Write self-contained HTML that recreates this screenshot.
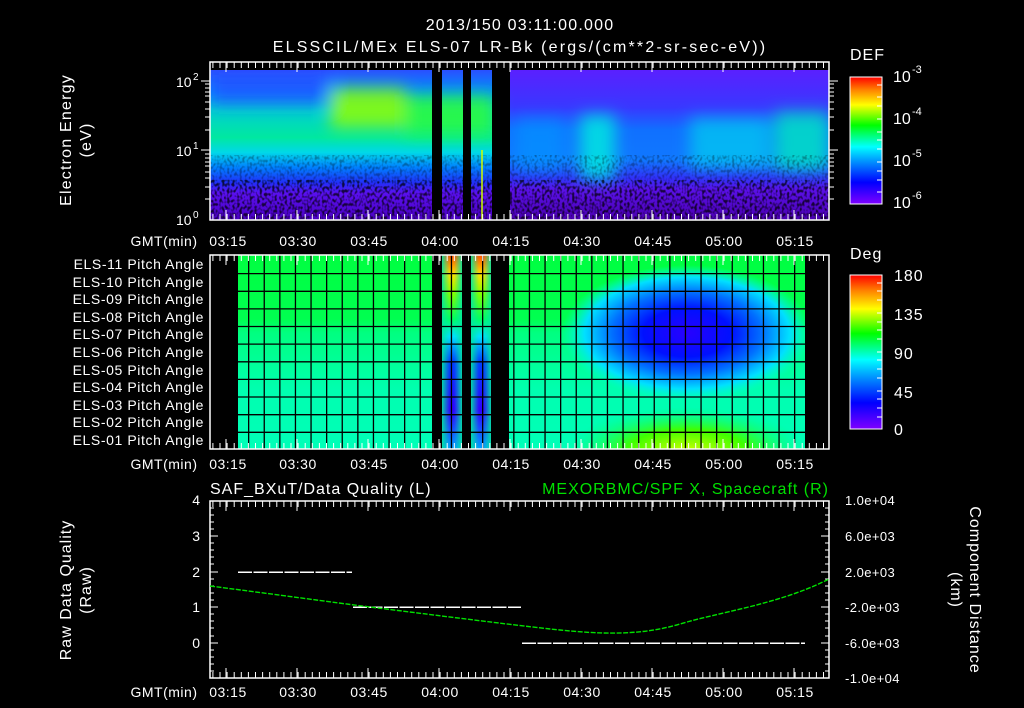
<!DOCTYPE html>
<html><head><meta charset="utf-8"><style>
html,body{margin:0;padding:0;background:#000;}
svg{display:block;}
text{font-family:"Liberation Sans",sans-serif;fill:#fff;}
</style></head><body>
<svg width="1024" height="708" viewBox="0 0 1024 708" xmlns="http://www.w3.org/2000/svg" font-size="14">
<defs>
<linearGradient id="rb" x1="0" y1="1" x2="0" y2="0">
<stop offset="0" stop-color="#7f00ff"/><stop offset="0.17" stop-color="#0000ff"/><stop offset="0.35" stop-color="#00a0ff"/><stop offset="0.45" stop-color="#00ffff"/><stop offset="0.62" stop-color="#00ff00"/><stop offset="0.78" stop-color="#ffff00"/><stop offset="0.9" stop-color="#ff8000"/><stop offset="1" stop-color="#ff0000"/>
</linearGradient>
<linearGradient id="sA" x1="0" y1="70" x2="0" y2="220" gradientUnits="userSpaceOnUse">
<stop offset="0" stop-color="#2a50ff"/><stop offset="0.15" stop-color="#0090ff"/><stop offset="0.27" stop-color="#00d0d0"/><stop offset="0.45" stop-color="#00e8a0"/><stop offset="0.55" stop-color="#00d8e8"/><stop offset="0.65" stop-color="#0080ff"/><stop offset="0.75" stop-color="#2030f8"/><stop offset="0.82" stop-color="#5a10f0"/><stop offset="1" stop-color="#4a00c0"/>
</linearGradient>
<linearGradient id="sD" x1="0" y1="70" x2="0" y2="220" gradientUnits="userSpaceOnUse">
<stop offset="0" stop-color="#5a20ff"/><stop offset="0.25" stop-color="#3838ff"/><stop offset="0.4" stop-color="#1070ff"/><stop offset="0.6" stop-color="#1078ff"/><stop offset="0.72" stop-color="#3030f8"/><stop offset="0.8" stop-color="#5a10e8"/><stop offset="1" stop-color="#4a00b0"/>
</linearGradient>
<linearGradient id="pA" x1="0" y1="255" x2="0" y2="449" gradientUnits="userSpaceOnUse">
<stop offset="0" stop-color="#00ff40"/><stop offset="0.33" stop-color="#00ff50"/><stop offset="0.4" stop-color="#00ff80"/><stop offset="0.7" stop-color="#00ffb0"/><stop offset="1" stop-color="#00ffb8"/>
</linearGradient>
<linearGradient id="pB" x1="0" y1="255" x2="0" y2="449" gradientUnits="userSpaceOnUse">
<stop offset="0" stop-color="#ff5000"/><stop offset="0.1" stop-color="#ffe000"/><stop offset="0.2" stop-color="#80ff00"/><stop offset="0.33" stop-color="#00ff60"/><stop offset="0.42" stop-color="#00e0ff"/><stop offset="0.55" stop-color="#0040ff"/><stop offset="0.8" stop-color="#3000ff"/><stop offset="1" stop-color="#00a0ff"/>
</linearGradient>
<linearGradient id="edge" x1="0" y1="0" x2="1" y2="0">
<stop offset="0" stop-color="#00e8a0" stop-opacity="0.9"/><stop offset="0.4" stop-color="#00e8a0" stop-opacity="0"/><stop offset="0.6" stop-color="#00e8a0" stop-opacity="0"/><stop offset="1" stop-color="#00e8a0" stop-opacity="0.9"/>
</linearGradient>
<radialGradient id="blue" cx="687" cy="333" r="1" gradientUnits="userSpaceOnUse" gradientTransform="translate(687 333) scale(125 68) translate(-687 -333)">
<stop offset="0" stop-color="#2800ff"/><stop offset="0.35" stop-color="#0010ff"/><stop offset="0.6" stop-color="#0070ff"/><stop offset="0.82" stop-color="#00e0ff"/><stop offset="1" stop-color="#00ffd0" stop-opacity="0"/>
</radialGradient>
<radialGradient id="yel" cx="687" cy="452" r="1" gradientUnits="userSpaceOnUse" gradientTransform="translate(687 452) scale(120 45) translate(-687 -452)">
<stop offset="0" stop-color="#d0ff00"/><stop offset="0.5" stop-color="#40ff00"/><stop offset="1" stop-color="#00ff80" stop-opacity="0"/>
</radialGradient>
<filter id="bl" x="-50%" y="-50%" width="200%" height="200%"><feGaussianBlur stdDeviation="8"/></filter>
<filter id="nz" x="0" y="0" width="100%" height="100%">
<feTurbulence type="fractalNoise" baseFrequency="0.4 0.3" numOctaves="1" seed="4"/>
<feColorMatrix type="matrix" values="0 0 0 0 0  0 0 0 0 0  0 0 0 0 0  -4 0 0 0 2.2"/>
</filter>
<clipPath id="segs"><rect x="210" y="70" width="222" height="150"/><rect x="442" y="70" width="21" height="150"/><rect x="471" y="70" width="21" height="150"/><rect x="510" y="70" width="319" height="150"/></clipPath>
</defs>

<!-- Titles -->
<text x="520" y="30" text-anchor="middle" font-size="16" letter-spacing="1.2">2013/150 03:11:00.000</text>
<text x="520" y="52" text-anchor="middle" font-size="16" letter-spacing="2.2">ELSSCIL/MEx ELS-07 LR-Bk  (ergs/(cm**2-sr-sec-eV))</text>

<!-- Top spectrogram -->
<g clip-path="url(#segs)">
<rect x="210" y="70" width="300" height="150" fill="url(#sA)"/>
<rect x="510" y="70" width="319" height="150" fill="url(#sD)"/>
<g filter="url(#bl)">
<rect x="330" y="88" width="75" height="40" fill="#90ff00" opacity="0.85"/>
<rect x="405" y="95" width="90" height="40" fill="#30ff30" opacity="0.8"/>
<rect x="580" y="115" width="35" height="65" fill="#00e8e0" opacity="0.85"/>
<rect x="690" y="118" width="80" height="50" fill="#00d0f0" opacity="0.7"/>
<rect x="775" y="112" width="54" height="58" fill="#00e8c0" opacity="0.8"/>
<rect x="515" y="118" width="50" height="55" fill="#0098ff" opacity="0.6"/>
<rect x="210" y="75" width="120" height="30" fill="#3030ff" opacity="0.5"/>
</g>
<rect x="210" y="155" width="619" height="65" filter="url(#nz)" opacity="0.3"/>
<rect x="210" y="180" width="619" height="40" filter="url(#nz)" opacity="0.6"/>
</g>
<line x1="482" y1="150" x2="482" y2="220" stroke="#d0ff00" stroke-width="1.5"/>
<rect x="210" y="62" width="619" height="158" fill="none" stroke="#fff" stroke-width="1.5"/>
<line x1="212.4" y1="65" x2="829" y2="65" stroke="#fff" stroke-width="6" stroke-dasharray="1 6.1"/>
<line x1="212.4" y1="217" x2="829" y2="217" stroke="#fff" stroke-width="6" stroke-dasharray="1 6.1"/>
<g stroke="#fff" stroke-width="1">
<path d="M226 62v10M297 62v10M368 62v10M439 62v10M510 62v10M581 62v10M652 62v10M723 62v10M794 62v10M226 220v-10M297 220v-10M368 220v-10M439 220v-10M510 220v-10M581 220v-10M652 220v-10M723 220v-10M794 220v-10"/>
<path d="M201 81h9M201 150h9M205 199h5M205 187h5M205 178h5M205 172h5M205 166h5M205 162h5M205 158h5M205 154h5M205 130h5M205 117h5M205 109h5M205 102h5M205 96h5M205 92h5M205 88h5M205 84h5"/>
<path d="M829 81h9M829 150h9M829 199h5M829 187h5M829 178h5M829 172h5M829 166h5M829 162h5M829 158h5M829 154h5M829 130h5M829 117h5M829 109h5M829 102h5M829 96h5M829 92h5M829 88h5M829 84h5"/>
</g>
<text x="176" y="87" font-size="14">10</text><text x="193" y="80" font-size="10">2</text>
<text x="176" y="156" font-size="14">10</text><text x="193" y="149" font-size="10">1</text>
<text x="176" y="225" font-size="14">10</text><text x="193" y="218" font-size="10">0</text>
<text transform="translate(71 140) rotate(-90)" text-anchor="middle" font-size="16" letter-spacing="1.2">Electron Energy</text>
<text transform="translate(91 140) rotate(-90)" text-anchor="middle" font-size="16" letter-spacing="1.2">(eV)</text>

<!-- time labels -->
<g font-size="14" text-anchor="middle" letter-spacing="0.5">
<text x="164" y="246">GMT(min)</text>
<text x="228" y="246">03:15</text><text x="298" y="246">03:30</text><text x="369" y="246">03:45</text><text x="440" y="246">04:00</text><text x="511" y="246">04:15</text><text x="582" y="246">04:30</text><text x="653" y="246">04:45</text><text x="724" y="246">05:00</text><text x="795" y="246">05:15</text>
<text x="164" y="469">GMT(min)</text>
<text x="228" y="469">03:15</text><text x="298" y="469">03:30</text><text x="369" y="469">03:45</text><text x="440" y="469">04:00</text><text x="511" y="469">04:15</text><text x="582" y="469">04:30</text><text x="653" y="469">04:45</text><text x="724" y="469">05:00</text><text x="795" y="469">05:15</text>
<text x="164" y="697">GMT(min)</text>
<text x="228" y="697">03:15</text><text x="298" y="697">03:30</text><text x="369" y="697">03:45</text><text x="440" y="697">04:00</text><text x="511" y="697">04:15</text><text x="582" y="697">04:30</text><text x="653" y="697">04:45</text><text x="724" y="697">05:00</text><text x="795" y="697">05:15</text>
</g>

<!-- Colorbar 1 -->
<rect x="850" y="77" width="32" height="127" fill="url(#rb)" stroke="#fff" stroke-width="1"/>
<g stroke="#fff"><path d="M877 85h5M877 97h5M877 106h5M877 119h5M877 132h5M877 140h5M877 149h5M877 162h5M877 171h5M877 180h5M877 192h5"/></g>
<text x="850" y="60" font-size="16" letter-spacing="1">DEF</text>
<text x="893" y="82" font-size="16">10</text><text x="912" y="73" font-size="11">-3</text>
<text x="893" y="124" font-size="16">10</text><text x="912" y="115" font-size="11">-4</text>
<text x="893" y="166" font-size="16">10</text><text x="912" y="157" font-size="11">-5</text>
<text x="893" y="208" font-size="16">10</text><text x="912" y="199" font-size="11">-6</text>

<!-- Middle panel -->
<rect x="238" y="255" width="194" height="194" fill="url(#pA)"/>
<rect x="509" y="255" width="296" height="194" fill="url(#pA)"/>
<rect x="509" y="255" width="296" height="194" fill="url(#yel)"/>
<rect x="509" y="255" width="296" height="194" fill="url(#blue)"/>
<rect x="442" y="255" width="20" height="194" fill="url(#pB)"/>
<rect x="471" y="255" width="20" height="194" fill="url(#pB)"/>
<rect x="442" y="255" width="20" height="194" fill="url(#edge)"/>
<rect x="471" y="255" width="20" height="194" fill="url(#edge)"/>
<g stroke="#000" stroke-width="1.3">
<path d="M238 273.6H805M238 291.3H805M238 308.9H805M238 326.5H805M238 344.1H805M238 361.8H805M238 379.4H805M238 397H805M238 414.7H805M238 432.3H805"/>
</g>
<line x1="248" y1="255" x2="805" y2="255" stroke="#000" stroke-width="194" stroke-dasharray="1.3 14.3" transform="translate(0 97)"/>
<rect x="432" y="255" width="10" height="194" fill="#000"/>
<rect x="462" y="255" width="9" height="194" fill="#000"/>
<rect x="491" y="255" width="18" height="194" fill="#000"/>
<rect x="210" y="255" width="619" height="194" fill="none" stroke="#fff" stroke-width="1.5"/>
<line x1="212.4" y1="258" x2="829" y2="258" stroke="#fff" stroke-width="6" stroke-dasharray="1 6.1"/>
<line x1="212.4" y1="446" x2="829" y2="446" stroke="#fff" stroke-width="6" stroke-dasharray="1 6.1"/>
<g stroke="#fff"><path d="M226 255v10M297 255v10M368 255v10M439 255v10M510 255v10M581 255v10M652 255v10M723 255v10M794 255v10M226 449v-10M297 449v-10M368 449v-10M439 449v-10M510 449v-10M581 449v-10M652 449v-10M723 449v-10M794 449v-10"/></g>
<g font-size="14" text-anchor="end" letter-spacing="0.6">
<text x="204" y="269">ELS-11 Pitch Angle</text><text x="204" y="287">ELS-10 Pitch Angle</text><text x="204" y="304">ELS-09 Pitch Angle</text><text x="204" y="322">ELS-08 Pitch Angle</text><text x="204" y="339">ELS-07 Pitch Angle</text><text x="204" y="357">ELS-06 Pitch Angle</text><text x="204" y="375">ELS-05 Pitch Angle</text><text x="204" y="392">ELS-04 Pitch Angle</text><text x="204" y="410">ELS-03 Pitch Angle</text><text x="204" y="427">ELS-02 Pitch Angle</text><text x="204" y="445">ELS-01 Pitch Angle</text>
</g>

<!-- Colorbar 2 -->
<rect x="850" y="275" width="32" height="154" fill="url(#rb)" stroke="#fff" stroke-width="1"/>
<g stroke="#fff"><path d="M877 283h5M877 291h5M877 300h5M877 313h5M877 322h5M877 330h5M877 339h5M877 352h5M877 360h5M877 369h5M877 378h5M877 391h5M877 399h5M877 408h5M877 417h5"/></g>
<text x="850" y="259" font-size="16" letter-spacing="1">Deg</text>
<g font-size="16" letter-spacing="1"><text x="894" y="281">180</text><text x="894" y="320">135</text><text x="894" y="359">90</text><text x="894" y="398">45</text><text x="894" y="435">0</text></g>

<!-- Bottom panel -->
<text x="210" y="494" font-size="16" letter-spacing="1">SAF_BXuT/Data Quality (L)</text>
<text x="829" y="494" font-size="16" letter-spacing="1" text-anchor="end" style="fill:#00e000">MEXORBMC/SPF X, Spacecraft (R)</text>
<rect x="210" y="501" width="619" height="177" fill="none" stroke="#fff" stroke-width="1.5"/>
<line x1="212.4" y1="504" x2="829" y2="504" stroke="#fff" stroke-width="6" stroke-dasharray="1 6.1"/>
<line x1="212.4" y1="675" x2="829" y2="675" stroke="#fff" stroke-width="6" stroke-dasharray="1 6.1"/>
<g stroke="#fff"><path d="M226 501v10M297 501v10M368 501v10M439 501v10M510 501v10M581 501v10M652 501v10M723 501v10M794 501v10M226 678v-10M297 678v-10M368 678v-10M439 678v-10M510 678v-10M581 678v-10M652 678v-10M723 678v-10M794 678v-10"/>
<path d="M210 536h8M210 572h8M210 607h8M210 643h8M210 508h4M210 515h4M210 522h4M210 529h4M210 543h4M210 550h4M210 557h4M210 564h4M210 579h4M210 586h4M210 593h4M210 600h4M210 614h4M210 621h4M210 628h4M210 636h4M210 650h4M210 657h4M210 664h4M210 671h4"/>
<path d="M829 536h-8M829 572h-8M829 607h-8M829 643h-8M829 508h-4M829 515h-4M829 522h-4M829 529h-4M829 543h-4M829 550h-4M829 557h-4M829 564h-4M829 579h-4M829 586h-4M829 593h-4M829 600h-4M829 614h-4M829 621h-4M829 628h-4M829 636h-4M829 650h-4M829 657h-4M829 664h-4M829 671h-4"/>
</g>
<g stroke="#fff" stroke-width="1.5" stroke-dasharray="14 1.5" shape-rendering="crispEdges">
<path d="M238 572H352M353 607H521M522 643H805"/>
</g>
<path d="M210 586 C 280 595, 330 602, 370 607 S 520 626, 560 630 S 640 636, 680 624 S 780 604, 829 579" fill="none" stroke="#00e000" stroke-width="1.4" stroke-dasharray="5 1.5"/>
<g font-size="14" text-anchor="end"><text x="200" y="505">4</text><text x="200" y="541">3</text><text x="200" y="577">2</text><text x="200" y="612">1</text><text x="200" y="648">0</text></g>
<g font-size="13" letter-spacing="0.4"><text x="845" y="505">1.0e+04</text><text x="845" y="541">6.0e+03</text><text x="845" y="577">2.0e+03</text><text x="845" y="612">-2.0e+03</text><text x="845" y="648">-6.0e+03</text><text x="845" y="683">-1.0e+04</text></g>
<text transform="translate(71 590) rotate(-90)" text-anchor="middle" font-size="16" letter-spacing="1">Raw Data Quality</text>
<text transform="translate(91 590) rotate(-90)" text-anchor="middle" font-size="16" letter-spacing="1">(Raw)</text>
<text transform="translate(970 590) rotate(90)" text-anchor="middle" font-size="16" letter-spacing="1">Component Distance</text>
<text transform="translate(951 590) rotate(90)" text-anchor="middle" font-size="16" letter-spacing="1">(km)</text>
</svg>
</body></html>
